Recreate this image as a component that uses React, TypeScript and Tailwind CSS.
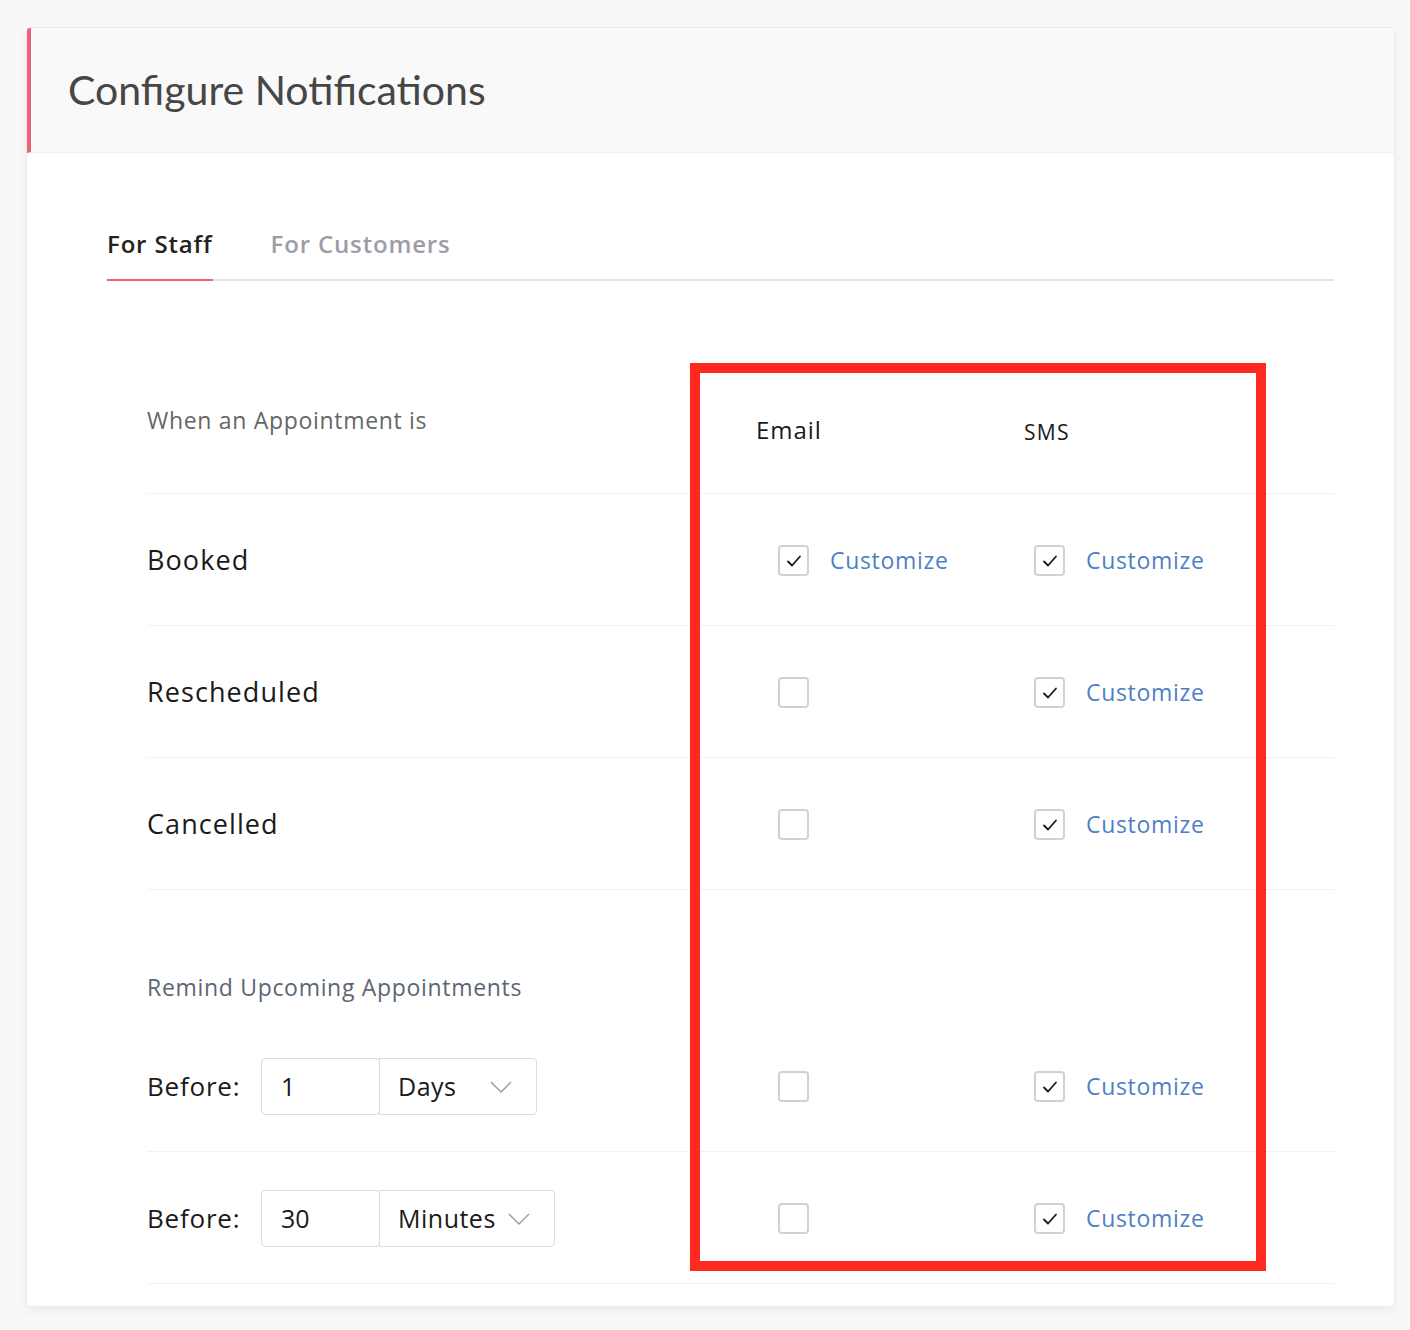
import React from 'react';

const font = { fontFamily: '"Open Sans", Lato, sans-serif' };

interface Channel {
  on: boolean;
}

interface EventRow {
  label: string;
  email: Channel;
  sms: Channel;
}

const events: EventRow[] = [
  { label: 'Booked', email: { on: true }, sms: { on: true } },
  { label: 'Rescheduled', email: { on: false }, sms: { on: true } },
  { label: 'Cancelled', email: { on: false }, sms: { on: true } },
];

const reminders = [
  { value: '1', unit: 'Days', width: 'w-[158px]' },
  { value: '30', unit: 'Minutes', width: 'w-[176px]' },
];

function Check({ on }: { on: boolean }) {
  return (
    <span className="flex h-[31px] w-[31px] items-center justify-center rounded-[4px] border-2 border-[#d2d2d2] bg-white">
      {on && (
        <svg width="18" height="18" viewBox="0 0 18 18" fill="none">
          <path d="M3 9.5l4 4 8-9" stroke="#1a1a1a" strokeWidth="1.8" strokeLinecap="round" strokeLinejoin="round" />
        </svg>
      )}
    </span>
  );
}

function ChannelCell({ on }: Channel) {
  return (
    <div className="flex items-center gap-[21px] pl-[37px]">
      <Check on={on} />
      {on && <span className="text-[23px] tracking-[0.03em] text-[#4f7fc4]">Customize</span>}
    </div>
  );
}

function Chevron() {
  return (
    <svg width="22" height="12" viewBox="0 0 22 12" fill="none">
      <path d="M1 1l10 10 10-10" stroke="#9a9a9a" strokeWidth="1.4" />
    </svg>
  );
}

export default function App() {
  return (
    <div className="relative min-h-[1330px] bg-[#f8f8f8] pl-[26px] pt-[27px]" style={font}>
      <div className="w-[1369px] overflow-hidden rounded-[4px] border border-[#ececec] bg-white shadow-[0_4px_10px_rgba(0,0,0,0.05)]">
        {/* Header */}
        <div className="flex h-[125px] items-center border-b border-l-4 border-b-[#efefef] border-l-[#f06077] bg-[#f9f9f9] pl-[37px]">
          <h1 className="font-['Lato'] text-[41px] text-[#464646]">Configure Notifications</h1>
        </div>

        <div className="pb-[22px] pl-[80px] pr-[60px] pt-[76px]">
          {/* Tabs */}
          <div className="flex gap-[58px] border-b-2 border-[#e3e5ec]">
            <div className="-mb-[2px] border-b-2 border-[#f06077] pb-[20px] text-[24px] font-semibold leading-[30px] tracking-[0.035em] text-[#222]">
              For Staff
            </div>
            <div className="pb-[20px] text-[24px] font-semibold leading-[30px] tracking-[0.035em] text-[#9c9da8]">
              For Customers
            </div>
          </div>

          {/* Table */}
          <div className="ml-[40px]">
            <div className="grid h-[213px] grid-cols-[594px_256px_256px_1fr] border-b border-[#f1f1f1] pt-[124px]">
              <span className="text-[23px] leading-[30px] tracking-[0.03em] text-[#666]">When an Appointment is</span>
              <span className="pl-[15px] pt-[10px] text-[24px] leading-[30px] tracking-[0.04em] text-[#1a1a1a]">Email</span>
              <span className="pl-[27px] pt-[12px] text-[21px] leading-[30px] tracking-[0.06em] text-[#1a1a1a]">SMS</span>
              <span />
            </div>

            {events.map((row) => (
              <div
                key={row.label}
                className="grid h-[132px] grid-cols-[594px_256px_256px_1fr] items-center border-b border-[#f1f1f1] pt-[2px]"
              >
                <span className="text-[27px] tracking-[0.04em] text-[#1a1a1a]">{row.label}</span>
                <ChannelCell on={row.email.on} />
                <ChannelCell on={row.sms.on} />
                <span />
              </div>
            ))}

            <div className="flex h-[130px] items-end pb-[18px]">
              <span className="text-[23px] leading-[30px] tracking-[0.03em] text-[#5b6673]">
                Remind Upcoming Appointments
              </span>
            </div>

            {reminders.map((r) => (
              <div
                key={r.unit}
                className="grid h-[132px] grid-cols-[594px_256px_256px_1fr] items-center border-b border-[#f1f1f1] pt-[2px]"
              >
                <div className="flex items-center">
                  <span className="w-[114px] text-[26px] tracking-[0.03em] text-[#1a1a1a]">Before:</span>
                  <div className="flex h-[57px]">
                    <div className="flex w-[119px] items-start rounded-[4px] border border-[#dcdcdc] pl-[19px] pt-[9px] text-[25px] text-[#1a1a1a]">
                      {r.value}
                    </div>
                    <div
                      className={`-ml-px flex ${r.width} items-center justify-between rounded-r-[4px] border border-[#dcdcdc] pl-[18px] pr-[24px] text-[25px] tracking-[0.02em] text-[#1a1a1a]`}
                    >
                      {r.unit}
                      <Chevron />
                    </div>
                  </div>
                </div>
                <ChannelCell on={false} />
                <ChannelCell on={true} />
                <span />
              </div>
            ))}
          </div>
        </div>
      </div>

      {/* Annotation overlay */}
      <div className="pointer-events-none absolute left-[690px] top-[363px] h-[908px] w-[576px] border-[10px] border-[#ff2a1f]" />
    </div>
  );
}
